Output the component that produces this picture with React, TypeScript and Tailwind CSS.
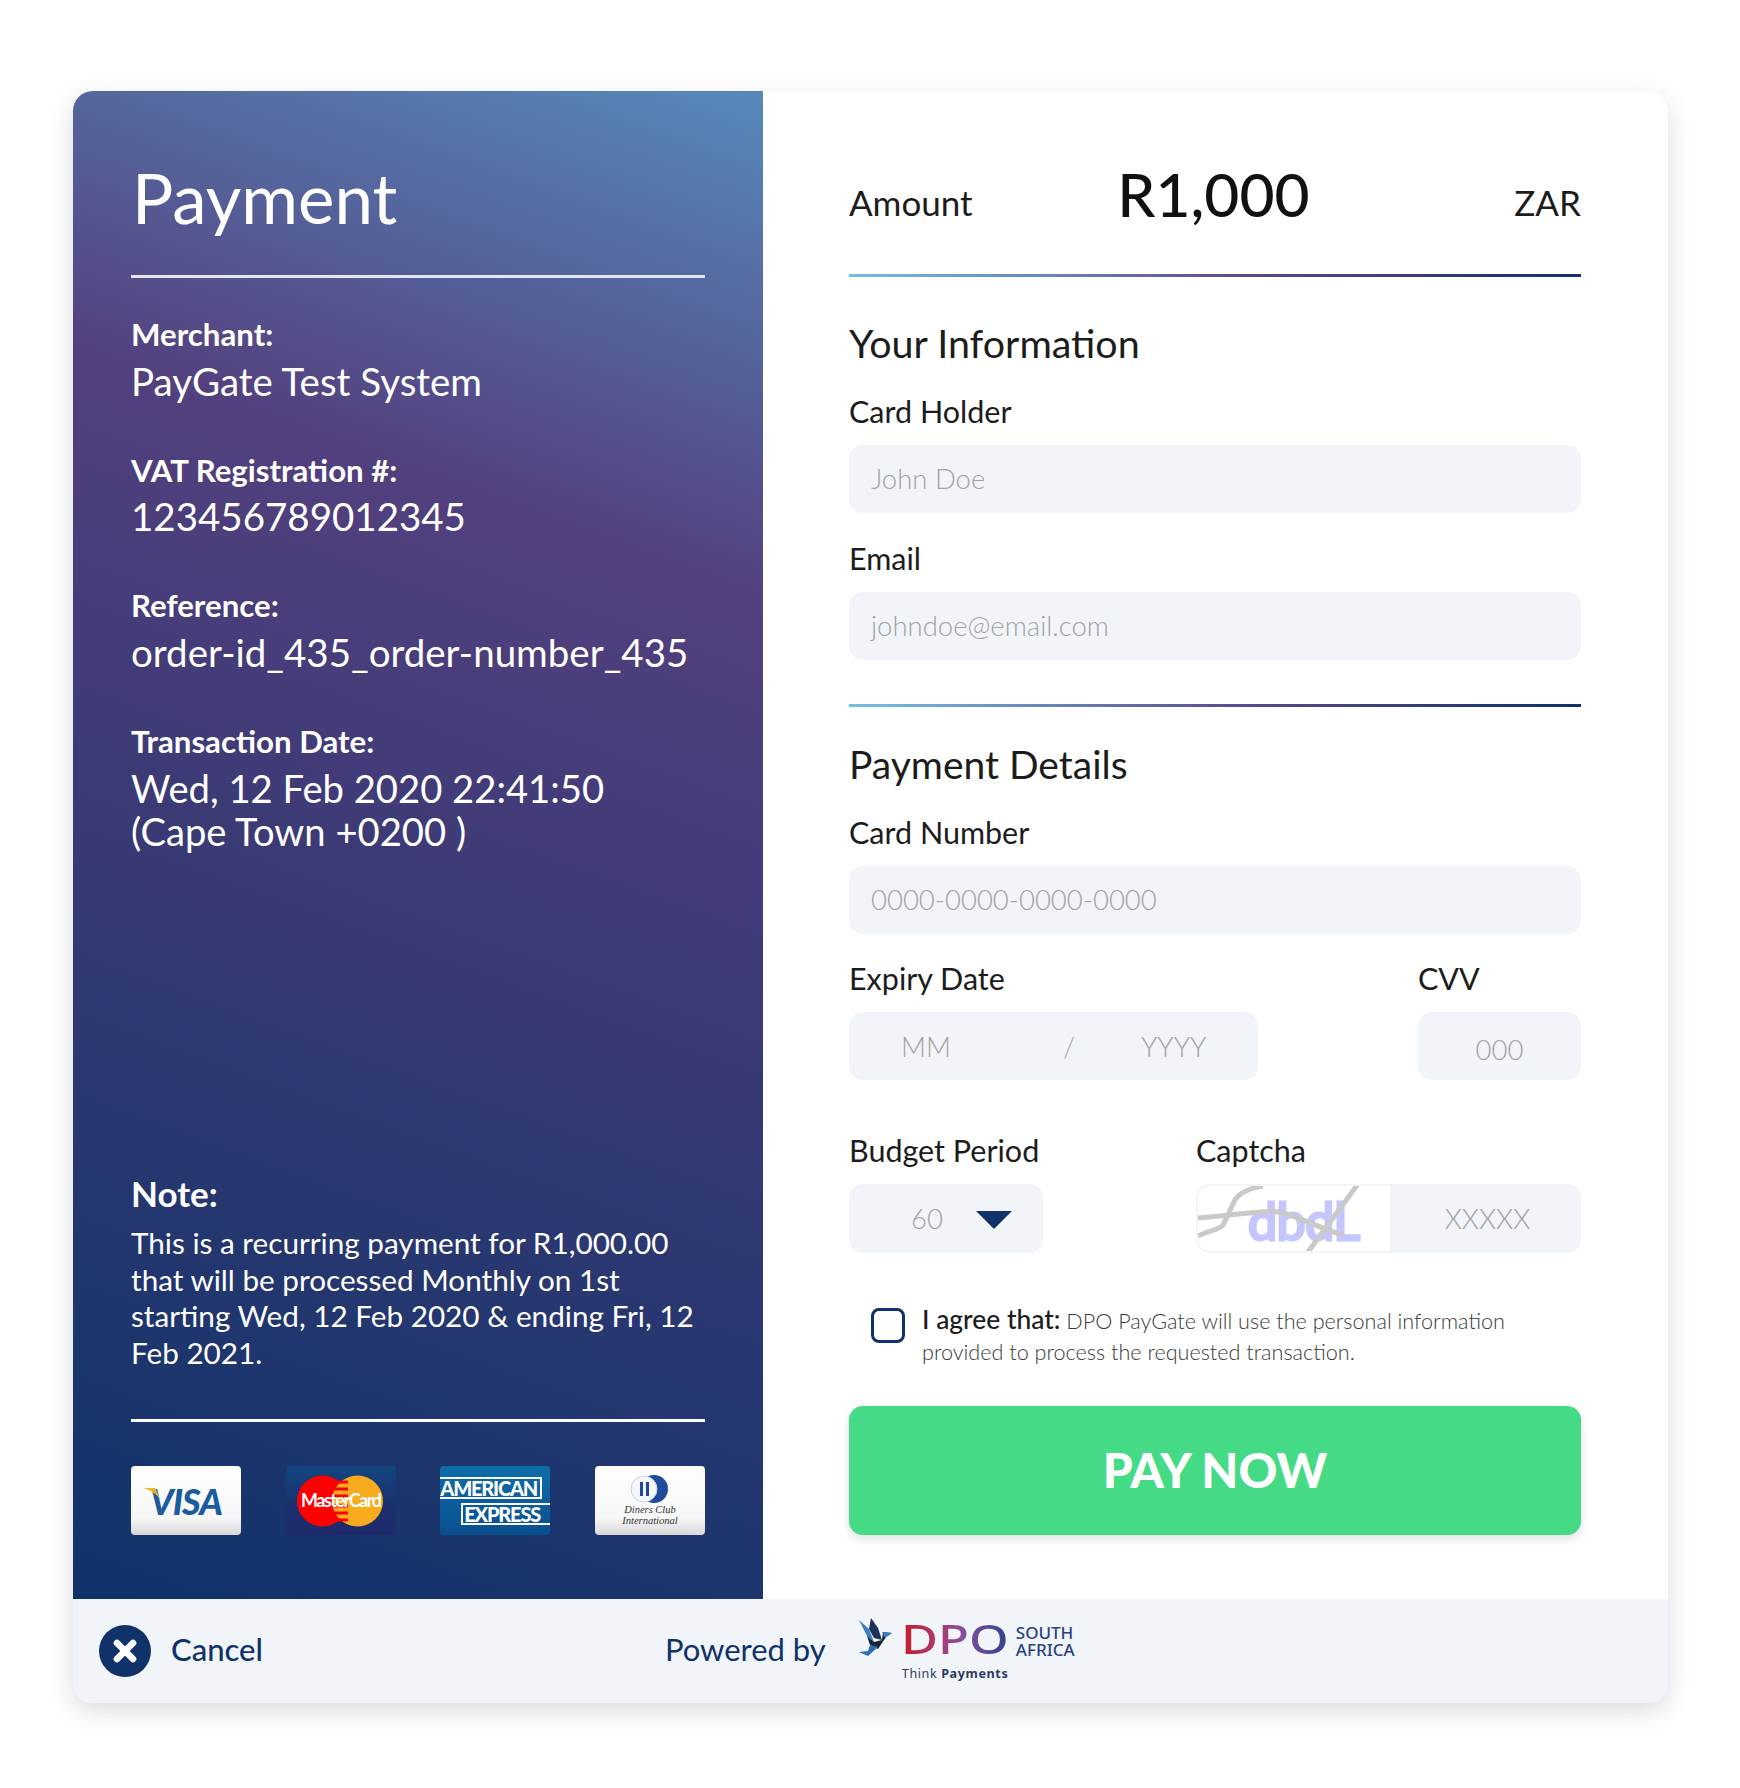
import React from 'react';
import { X } from 'lucide-react';

const Field: React.FC<{ label: string; value: string }> = ({ label, value }) => (
  <div className="mb-[43px]">
    <div className="text-[31.2px] leading-[46px] font-bold text-white">{label}</div>
    <div className="pt-[0.5px] text-[38.5px] leading-[46px] font-normal text-white">{value}</div>
  </div>
);

const Label: React.FC<{ children: React.ReactNode }> = ({ children }) => (
  <div className="text-[30.5px] leading-[40px] text-[#1c1c1c]">{children}</div>
);

const GradientRule: React.FC = () => (
  <div className="h-[3px] w-full bg-[linear-gradient(90deg,#74bfe2_0%,#5a4a86_55%,#0f3268_100%)]" />
);

const TextInput: React.FC<{ placeholder: string }> = ({ placeholder }) => (
  <div className="mt-[14px] flex h-[68px] items-center rounded-[14px] bg-[#f1f4f8] px-[22px] text-[27.5px] font-light text-[#a3a3a3]">
    {placeholder}
  </div>
);

const CardBadge: React.FC<{ className: string; children: React.ReactNode }> = ({ className, children }) => (
  <div className={`relative flex h-[69px] w-[110px] items-center justify-center overflow-hidden rounded-[4px] ${className}`}>
    {children}
  </div>
);

const CardLogos: React.FC = () => (
  <div className="flex justify-between">
    <CardBadge className="bg-[linear-gradient(180deg,#ffffff_0%,#f7f7f7_75%,#d8d8d8_100%)]">
      <span className="text-[36px] font-black italic tracking-[-1px] text-[#1a5c9e]">VISA</span>
      <svg className="absolute left-[12px] top-[22px]" width="20" height="14" viewBox="0 0 20 14">
        <path d="M0 0 L12 0 L18 13 C14 6 8 2 0 0 Z" fill="#f0b429" />
      </svg>
    </CardBadge>
    <CardBadge className="bg-[linear-gradient(180deg,#12467f_0%,#1b2f6e_60%,#1f2a6b_100%)]">
      <svg className="absolute left-0 top-0" width="110" height="69" viewBox="0 0 110 69">
        <circle cx="36.5" cy="35" r="25.5" fill="#ff0000" />
        <circle cx="71.5" cy="35" r="25.5" fill="#f7ab1d" />
        <g stroke="#ff0000" strokeWidth="3">
          <path d="M46 16 H62" />
          <path d="M43 23 H62" />
          <path d="M43 30 H62" />
          <path d="M43 40 H62" />
          <path d="M43 47 H62" />
          <path d="M46 54 H62" />
        </g>
      </svg>
      <span className="relative text-[18px] font-bold tracking-[-1.5px] text-white">MasterCard</span>
    </CardBadge>
    <CardBadge className="bg-[linear-gradient(180deg,#0d6ea8_0%,#0b5c9c_55%,#0a4f8e_100%)]">
      <div className="flex w-full flex-col gap-[4px] text-[20px] font-black leading-[18px] tracking-[-1.2px] text-white">
        <span className="w-[102px] whitespace-nowrap border-y-2 border-r-2 border-white">AMERICAN</span>
        <span className="ml-[21px] whitespace-nowrap border-y-2 border-l-2 border-white pl-[1px]">EXPRESS</span>
      </div>
    </CardBadge>
    <CardBadge className="flex-col bg-[linear-gradient(180deg,#ffffff_0%,#f7f7f7_75%,#d8d8d8_100%)]">
      <svg width="42" height="28" viewBox="0 0 42 28">
        <circle cx="25" cy="14" r="14" fill="#1d4a9a" />
        <circle cx="15" cy="14" r="13" fill="#f4f6fb" stroke="#c7d0e6" />
        <rect x="11" y="7" width="3" height="14" fill="#1d4a9a" />
        <rect x="17" y="7" width="3" height="14" fill="#1d4a9a" />
      </svg>
      <span className="mt-[1px] text-center font-['Liberation_Serif'] text-[10.5px] italic leading-[11px] text-[#333]">
        Diners Club
        <br />
        International
      </span>
    </CardBadge>
  </div>
);

const DpoLogo: React.FC = () => (
  <div className="flex flex-col">
    <div className="flex items-start">
      <svg className="mr-[8px] mt-[-3px] shrink-0" width="34" height="40" viewBox="0 0 34 40">
        <polygon points="0,2 10,11 15,24 8,18" fill="#3d7fc4" />
        <polygon points="12,0 19,10 23,22 15,20 10,11" fill="#1c3157" />
        <polygon points="8,18 15,24 23,22 24,14 33,15 27,19 19,31 11,27" fill="#1b2230" />
        <polygon points="23,14 33,15 26,20" fill="#3d7fc4" />
        <polygon points="11,27 19,29 9,38 0,34 9,33" fill="#2c6fb5" />
      </svg>
      <div className="mt-[3px] w-[106px] shrink-0">
        <span className="inline-block origin-left scale-x-[1.3] bg-[linear-gradient(90deg,#c3202c_0%,#a9386f_35%,#8a4d9f_55%,#2f4290_100%)] bg-clip-text font-['Noto_Sans'] text-[39px] font-medium leading-[30px] text-transparent">
          DPO
        </span>
      </div>
      <span className="ml-[9px] mt-[3px] font-['Noto_Sans'] text-[17px] font-medium leading-[17px] text-[#2b4384]">
        SOUTH
        <br />
        AFRICA
      </span>
    </div>
    <div className="ml-[43px] mt-[6px] font-['Noto_Sans'] text-[12.6px] leading-[15px] tracking-[0.6px] text-[#2f3a5e]">
      Think <span className="font-bold">Payments</span>
    </div>
  </div>
);

const App: React.FC = () => {
  return (
    <div className="min-h-[1788px] bg-white pl-[73px] pt-[91px] font-['Lato',sans-serif]">
      <div className="w-[1595px] overflow-hidden rounded-[20px] bg-white shadow-[0_8px_24px_rgba(30,40,60,0.16)]">
        <div className="flex h-[1508px]">
          {/* left summary */}
          <div className="flex w-[690px] flex-col bg-[linear-gradient(200deg,#578abb_0%,#53407e_29%,#3a3a75_54%,#0e3369_100%)] px-[58px] pb-[64px]">
            <h1 className="ml-[1px] mt-[67px] text-[69px] font-normal leading-[80px] text-white">Payment</h1>
            <div className="mb-[33px] mt-[37px] h-[3px] bg-[#e2e6f0]" />
            <Field label="Merchant:" value="PayGate Test System" />
            <Field label="VAT Registration #:" value="123456789012345" />
            <Field label="Reference:" value="order-id_435_order-number_435" />
            <div>
              <div className="text-[31.2px] leading-[46px] font-bold text-white">Transaction Date:</div>
              <div className="pt-[3px] text-[38.2px] leading-[43px] font-normal text-white">
                Wed, 12 Feb 2020 22:41:50
                <br />
                (Cape Town +0200 )
              </div>
            </div>
            <div className="mt-auto text-white">
              <div className="mb-[9px] text-[35px] font-bold leading-[46px]">Note:</div>
              <p className="text-[29.7px] leading-[36.5px]">
                This is a recurring payment for R1,000.00 that will be processed Monthly on 1st starting Wed, 12 Feb
                2020 &amp; ending Fri, 12 Feb 2021.
              </p>
            </div>
            <div className="mb-[44px] mt-[48px] h-[3px] bg-white" />
            <CardLogos />
          </div>

          {/* right form */}
          <div className="flex-1 pl-[86px] pr-[87px]">
            <div className="flex h-[183px] items-end justify-between pb-[50px] text-[35px] text-[#1c1c1c]">
              <span className="leading-[44px]">Amount</span>
              <span className="mb-[-6px] ml-[-60px] text-[60.5px] font-medium leading-[72px] text-[#111]">R1,000</span>
              <span className="leading-[44px]">ZAR</span>
            </div>
            <GradientRule />
            <h2 className="mt-[42px] text-[39.4px] leading-[48px] text-[#1c1c1c]">Your Information</h2>
            <div className="mt-[24px]">
              <Label>Card Holder</Label>
              <TextInput placeholder="John Doe" />
            </div>
            <div className="mt-[25px]">
              <Label>Email</Label>
              <TextInput placeholder="johndoe@email.com" />
            </div>
            <div className="mt-[44px]">
              <GradientRule />
            </div>
            <h2 className="mt-[33px] text-[39px] leading-[48px] text-[#1c1c1c]">Payment Details</h2>
            <div className="mt-[24px]">
              <Label>Card Number</Label>
              <TextInput placeholder="0000-0000-0000-0000" />
            </div>
            <div className="mt-[24px] flex justify-between">
              <div className="w-[409px]">
                <Label>Expiry Date</Label>
                <div className="mt-[14px] flex h-[68px] items-center rounded-[14px] bg-[#f1f4f8] pl-[52px] pt-[2px] text-[27.5px] font-light text-[#a3a3a3]">
                  <span className="w-[162px]">MM</span>
                  <span className="w-[78px]">/</span>
                  <span>YYYY</span>
                </div>
              </div>
              <div className="w-[163px]">
                <Label>CVV</Label>
                <div className="mt-[14px] flex h-[68px] items-center justify-center rounded-[14px] bg-[#f1f4f8] pt-[8px] text-[27.5px] font-light text-[#a3a3a3]">
                  000
                </div>
              </div>
            </div>
            <div className="mt-[50px] flex justify-between">
              <div className="w-[194px]">
                <Label>Budget Period</Label>
                <div className="mt-[14px] flex h-[69px] items-center rounded-[14px] bg-[#f1f4f8] pl-[62px] text-[27.5px] font-light text-[#a3a3a3]">
                  <span>60</span>
                  <svg className="ml-[33px] mt-[3px]" width="36" height="18" viewBox="0 0 36 18">
                    <polygon points="0,0 36,0 18,18" fill="#0f3268" />
                  </svg>
                </div>
              </div>
              <div className="w-[385px]">
                <Label>Captcha</Label>
                <div className="mt-[14px] flex h-[69px] items-center overflow-hidden rounded-[14px] border-2 border-[#f1f4f8] bg-[#f1f4f8]">
                  <svg className="shrink-0 bg-white" width="192" height="65" viewBox="0 0 192 65">
                    <text
                      x="50"
                      y="54"
                      fill="#c5c5ff"
                      stroke="#c5c5ff"
                      strokeWidth="3"
                      fontFamily="Lato"
                      fontSize="52"
                      fontWeight="400"
                      textLength="112"
                    >
                      dbdL
                    </text>
                    <g fill="none" stroke="#c9c9c9" strokeWidth="5">
                      <path d="M0 32 L32 29 C50 27 70 24 82 26 C100 30 120 42 145 49" />
                      <path d="M0 50 C12 44 22 44 25 39 C30 30 32 24 35 18 C38 10 45 3 65 0" />
                      <path d="M160 -2 L110 66" />
                    </g>
                  </svg>
                  <span className="flex-1 pl-[6px] text-center text-[27.5px] font-light text-[#a3a3a3]">XXXXX</span>
                </div>
              </div>
            </div>
            <div className="mt-[51px] flex items-start pl-[22px]">
              <div className="mt-[4px] h-[35px] w-[34px] shrink-0 rounded-[8px] border-[3px] border-[#0f3268]" />
              <p className="ml-[17px] text-[21.6px] font-light leading-[31px] text-[#3a3a3a]">
                <span className="text-[26.4px] font-medium text-[#1c1c1c]">I agree that:</span> DPO PayGate will use the
                personal information
                <br />
                provided to process the requested transaction.
              </p>
            </div>
            <button className="mt-[37.5px] flex h-[129px] w-full items-center justify-center rounded-[14px] bg-[#45da86] text-[48px] font-black text-white shadow-[0_4px_10px_rgba(0,0,0,0.12)]">
              PAY NOW
            </button>
          </div>
        </div>

        {/* footer */}
        <div className="flex h-[104px] items-center bg-[#f1f4f8] pl-[26px]">
          <div className="flex h-[52px] w-[52px] items-center justify-center rounded-full bg-[#0f3268]">
            <X size={32} strokeWidth={5} className="text-white" />
          </div>
          <span className="mb-[4px] ml-[20px] text-[31px] font-medium text-[#0f3268]">Cancel</span>
          <span className="mb-[4px] ml-[402px] text-[31px] text-[#0f3268]">Powered by</span>
          <div className="ml-[33px]">
            <DpoLogo />
          </div>
        </div>
      </div>
    </div>
  );
};

export default App;
